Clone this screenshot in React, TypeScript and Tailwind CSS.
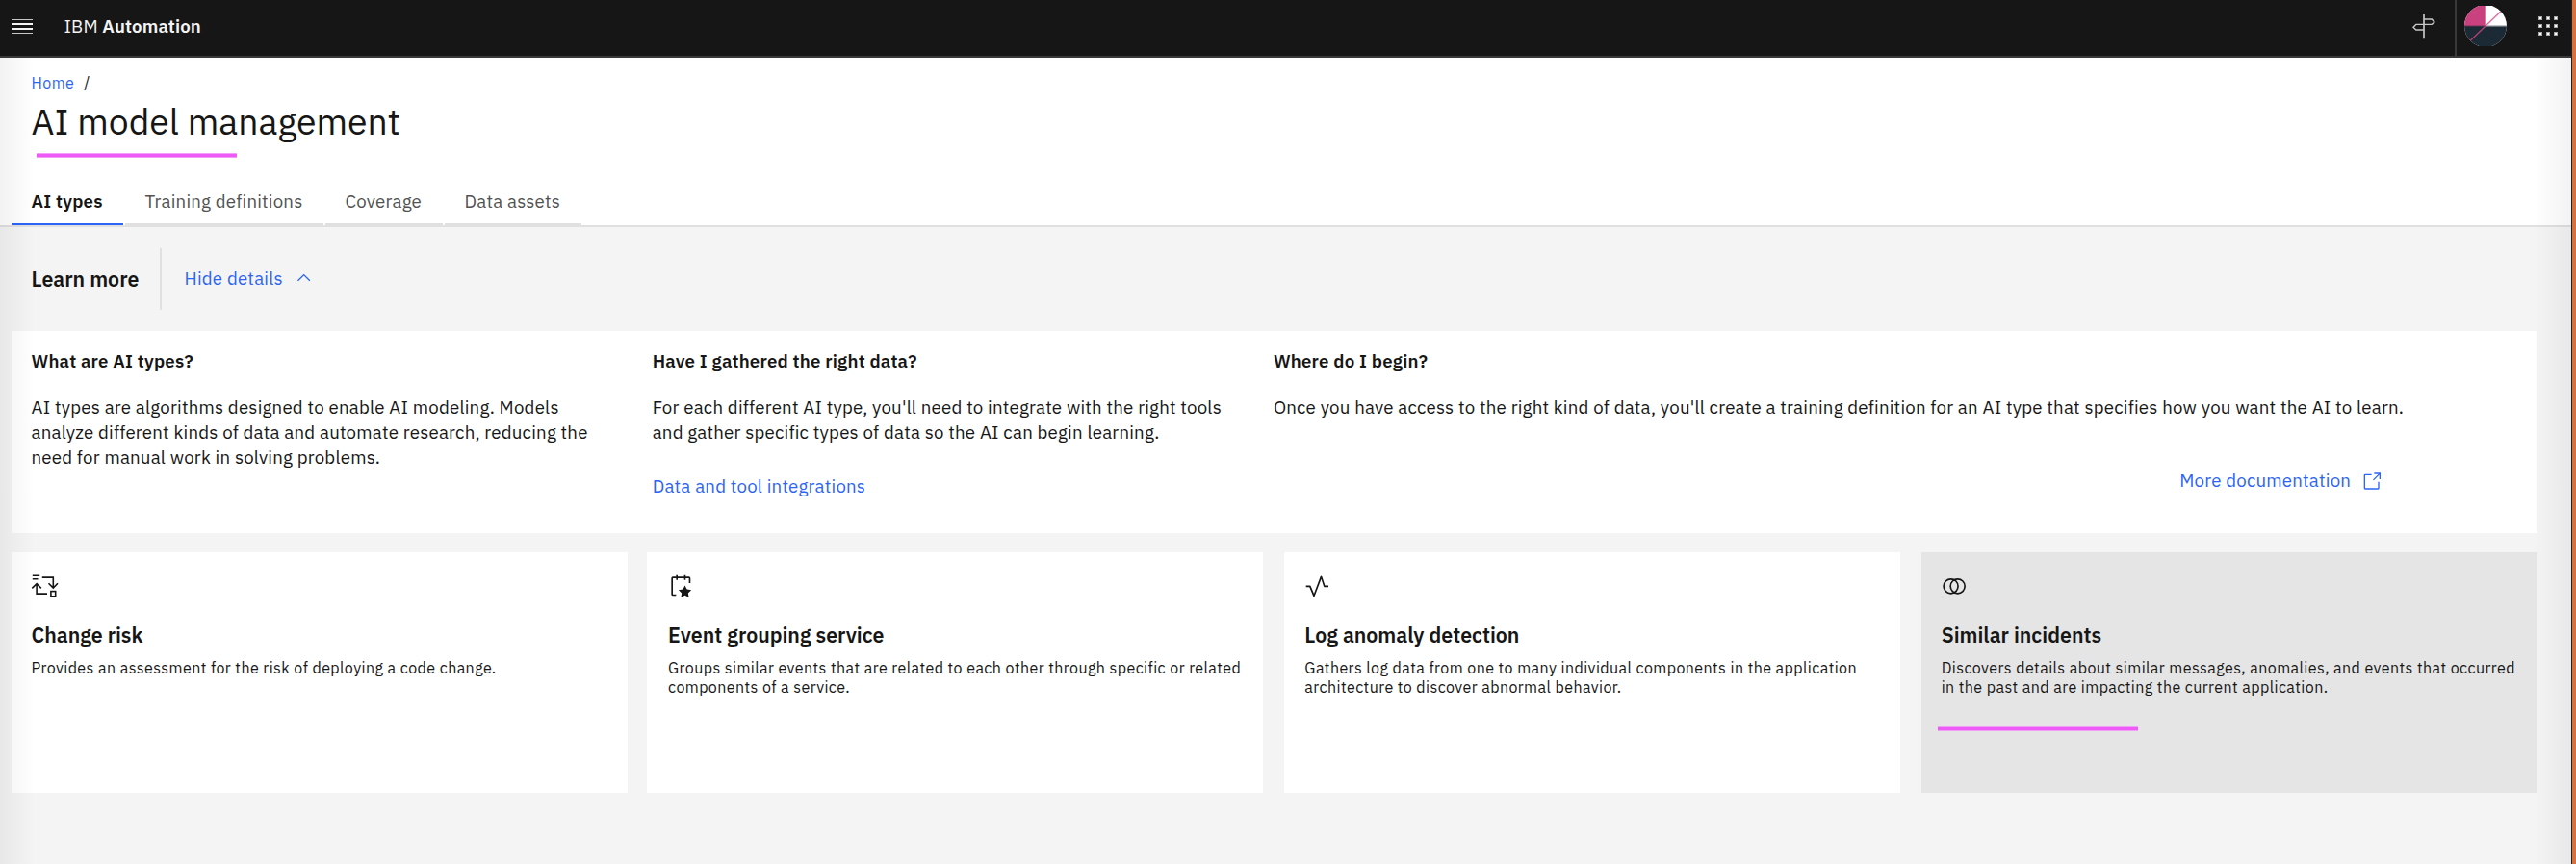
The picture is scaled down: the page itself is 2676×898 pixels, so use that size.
import type { ReactNode } from "react";

const body = "text-[18.667px] tracking-[0.213px]";

function MenuIcon() {
  return (
    <svg className="h-[18px] w-[22px]" viewBox="0 0 22 18" shapeRendering="crispEdges">
      <rect y="0.5" width="22" height="1.5" fill="#c6c6c6" />
      <rect y="5" width="22" height="1.5" fill="#f4f4f4" />
      <rect y="10" width="22" height="1.5" fill="#f4f4f4" />
      <rect y="14.5" width="22" height="1.5" fill="#c6c6c6" />
    </svg>
  );
}

function SignpostIcon() {
  return (
    <svg className="h-[26px] w-[24px]" viewBox="0 0 24 26" fill="none" stroke="#c6c6c6" strokeWidth="1.4">
      <path d="M12 0V25.3" strokeWidth="1.7" />
      <path d="M12 5H20.2L23 8L20.2 10.4H12" />
      <path d="M12 10.4H3.8L1 13.2L3.8 16H12" />
    </svg>
  );
}

function Avatar() {
  return (
    <svg className="h-[42px] w-[44px]" viewBox="0 0 44 42">
      <defs>
        <clipPath id="avatar">
          <circle cx="22" cy="21" r="22" />
        </clipPath>
      </defs>
      <g clipPath="url(#avatar)">
        <rect width="44" height="42" fill="#ffffff" />
        <rect width="22" height="21" fill="#c9417e" />
        <rect y="21" width="44" height="21" fill="#1c2a35" />
        <path d="M22 0V20" stroke="#e3b9cd" strokeWidth="1" />
        <path d="M22 20.8H44" stroke="#a7adb2" strokeWidth="1.2" />
        <path d="M0 20.8H22" stroke="#8a3a63" strokeWidth="1" />
        <path d="M37.7 6L22 21" stroke="#dd6ea1" strokeWidth="1.4" />
        <path d="M22 21L6.2 36.2" stroke="#b03e74" strokeWidth="1.4" />
      </g>
    </svg>
  );
}

function SwitcherIcon() {
  const cells = [0, 8, 16];
  return (
    <svg className="h-[20px] w-[20px]" viewBox="0 0 20 20">
      {cells.map((y) =>
        cells.map((x) => (
          <g key={`${x}-${y}`}>
            <rect x={x} y={y} width="4" height="4" fill="#a8a8a8" />
            <rect x={x + 1} y={y + 1} width="2" height="2" fill="#ffffff" />
          </g>
        )),
      )}
    </svg>
  );
}

function ChangeIcon() {
  return (
    <svg className="h-[26.667px] w-[26.667px] overflow-visible" viewBox="0 0 26.667 26.667" fill="none" stroke="#161616" strokeWidth="1.6">
      <path d="M0.8 2.2H8.2M0.8 5.8H6.5" />
      <path d="M10.8 4.1H22.3V15.4M17.5 10.2L22.3 15L27 10.2" />
      <path d="M16 21.1H5.1V10.6M0.3 15.4L5.1 10.6L9.8 15.4" />
      <rect x="19.9" y="18.6" width="4.8" height="5.2" />
    </svg>
  );
}

function EventIcon() {
  return (
    <svg className="h-[26.667px] w-[26.667px]" viewBox="0 0 32 32" fill="#161616">
      <path d="M26,4H22V2H20V4H12V2H10V4H6A2,2,0,0,0,4,6V26a2,2,0,0,0,2,2h4V26H6V6h4V8h2V6h8V8h2V6h4v6h2V6A2,2,0,0,0,26,4Z" />
      <path d="M21 15L23.549 19.938L29 20.729L25 24.573L26 30L21 27.438L16 30L17 24.573L13 20.729L18.6 19.938Z" />
    </svg>
  );
}

function ActivityIcon() {
  return (
    <svg className="h-[26.667px] w-[26.667px]" viewBox="0 0 32 32" fill="#161616">
      <path d="M12,29a1,1,0,0,1-.92-.62L6.33,17H2V15H7a1,1,0,0,1,.92.62L12,25.28,20.06,3.65A1,1,0,0,1,21,3a1,1,0,0,1,.93.68L25.72,15H30v2H25a1,1,0,0,1-.95-.68L21,7,12.94,28.35A1,1,0,0,1,12,29Z" />
    </svg>
  );
}

function CirclesIcon() {
  return (
    <svg className="h-[26.667px] w-[26.667px]" viewBox="0 0 32 32" fill="none" stroke="#161616" strokeWidth="2">
      <circle cx="11.5" cy="16" r="9" />
      <circle cx="20" cy="16" r="9" />
    </svg>
  );
}

function LaunchIcon() {
  return (
    <svg className="h-[21.333px] w-[21.333px]" viewBox="0 0 32 32" fill="#2c64f6">
      <path d="M26,28H6a2,2,0,0,1-2-2V6A2,2,0,0,1,6,4H16V6H6V26H26V16h2V26A2,2,0,0,1,26,28Z" />
      <path d="M20 2V4H26.586L18 12.586L19.414 14L28 5.414V12H30V2Z" />
    </svg>
  );
}

function ChevronUpIcon() {
  return (
    <svg className="h-[21.333px] w-[21.333px]" viewBox="0 0 32 32" fill="#2c64f6">
      <path d="M16 10L26 20L24.6 21.4L16 12.8L7.4 21.4L6 20Z" />
    </svg>
  );
}

function Header() {
  return (
    <header className="flex h-[60px] justify-between border-b-2 border-[#393939] bg-[#161616]">
      <div className="flex">
        <div className="pt-[18.5px] pl-3">
          <MenuIcon />
        </div>
        <div className="ml-[32.5px] pt-[15px] text-[18.667px] leading-6 tracking-[0.133px] text-[#f4f4f4]">
          IBM <span className="font-semibold">Automation</span>
        </div>
      </div>
      <div className="flex">
        <div className="w-[44px] pt-[15px]">
          <SignpostIcon />
        </div>
        <div className="h-[58px] w-[2px] bg-[#393939]" />
        <div className="ml-2 pt-1.5">
          <Avatar />
        </div>
        <div className="mr-[14px] ml-[33px] pt-[17px]">
          <SwitcherIcon />
        </div>
      </div>
    </header>
  );
}

function Tab({ label, className, active }: { label: string; className: string; active?: boolean }) {
  return (
    <div
      className={`h-[37px] border-b-2 pl-[20.5px] leading-6 whitespace-nowrap ${body} ${className} ${
        active ? "border-[#2c64f6] font-semibold text-[#161616]" : "border-[#e0e0e0] text-[#525252]"
      }`}
    >
      {label}
    </div>
  );
}

function Marker({ className }: { className: string }) {
  return <div className={`h-[5px] border-y border-[#f29df7] bg-[#ee5af5] ${className}`} />;
}

function InfoColumn({ title, children, className }: { title: string; children: ReactNode; className: string }) {
  return (
    <section className={`pt-[18px] pl-[20.5px] leading-[26px] ${body} ${className}`}>
      <h2 className="mb-[22px] font-semibold">{title}</h2>
      {children}
    </section>
  );
}

function Card({ icon, title, text, className, children }: { icon: ReactNode; title: string; text: string; className: string; children?: ReactNode }) {
  return (
    <article className={`h-[250px] w-[640px] shrink-0 pt-[22px] ${className}`}>
      <div className="pr-[21.33px]">
        {icon}
        <h3 className="mt-[23.333px] text-[21.333px] leading-7 font-semibold">{title}</h3>
        <p className="mt-[10px] -mr-2 text-[16px] leading-5 tracking-[0.427px]">{text}</p>
      </div>
      {children}
    </article>
  );
}

export default function App() {
  return (
    <div className="flex h-[898px] w-full overflow-hidden font-['IBM_Plex_Sans','Noto_Sans',sans-serif] text-[#161616]">
      <div className="relative w-[2671px] shrink-0 bg-[#f4f4f4]">
        <Header />
        <div className="border-b-2 border-[#e0e0e0] bg-white pt-4">
          <div className="pl-[32.5px]">
            <nav className="flex gap-[10px] text-[16px] leading-5 tracking-[0.427px]">
              <a className="text-[#2c64f6]">Home</a>
              <span>/</span>
            </nav>
            <h1 className="mt-1.5 text-[37.333px] leading-[48px]">AI model management</h1>
          </div>
          <Marker className="mt-[9px] ml-[38px] w-[208px]" />
          <div className="mt-[33px] ml-3 flex gap-[2px]">
            <Tab label="AI types" className="w-[116px]" active />
            <Tab label="Training definitions" className="w-[206px]" />
            <Tab label="Coverage" className="w-[122px]" />
            <Tab label="Data assets" className="w-[142px]" />
          </div>
        </div>

        <div className="mt-[22px] flex h-16 items-center pl-[32.5px]">
          <h2 className="w-[133.5px] text-[21.333px] leading-7 font-semibold">Learn more</h2>
          <div className="h-16 w-[2px] bg-[#e0e0e0]" />
          <div className={`mb-[2px] ml-[23.5px] flex items-center text-[#2c64f6] ${body}`}>
            <span className="w-[113px] leading-6">Hide details</span>
            <ChevronUpIcon />
          </div>
        </div>

        <div className="mt-[22px] ml-3 flex h-[210px] w-[2624px] bg-white">
          <InfoColumn title="What are AI types?" className="w-[645.2px]">
            <p className="w-[602px]">
              AI types are algorithms designed to enable AI modeling. Models analyze different kinds of data and automate
              research, reducing the need for manual work in solving problems.
            </p>
          </InfoColumn>
          <InfoColumn title="Have I gathered the right data?" className="w-[645.2px]">
            <p className="w-[602px]">
              For each different AI type, you'll need to integrate with the right tools and gather specific types of data so
              the AI can begin learning.
            </p>
            <a className="mt-[30px] block text-[#2c64f6]">Data and tool integrations</a>
          </InfoColumn>
          <InfoColumn title="Where do I begin?" className="flex-1">
            <p>
              Once you have access to the right kind of data, you'll create a training definition for an AI type that
              specifies how you want the AI to learn.
            </p>
            <a className="mt-[50px] mr-[161.5px] flex justify-end text-[#2c64f6]">
              <span className="mr-[11px]">More documentation</span>
              <span className="pt-[4.3px]">
                <LaunchIcon />
              </span>
            </a>
          </InfoColumn>
        </div>

        <div className="mt-5 ml-3 flex">
          <Card
            icon={<ChangeIcon />}
            title="Change risk"
            text="Provides an assessment for the risk of deploying a code change."
            className="bg-white pl-[20.5px]"
          />
          <Card
            icon={<EventIcon />}
            title="Event grouping service"
            text="Groups similar events that are related to each other through specific or related components of a service."
            className="ml-5 bg-white pl-[22px]"
          />
          <Card
            icon={<ActivityIcon />}
            title="Log anomaly detection"
            text="Gathers log data from one to many individual components in the application architecture to discover abnormal behavior."
            className="ml-[22px] bg-white pl-[21.33px]"
          />
          <Card
            icon={<CirclesIcon />}
            title="Similar incidents"
            text="Discovers details about similar messages, anomalies, and events that occurred in the past and are impacting the current application."
            className="ml-[22px] bg-[#e5e5e5] pl-[20.67px]"
          >
            <Marker className="mt-[31px] -ml-[4.17px] w-[208px]" />
          </Card>
        </div>

        <div className="pointer-events-none absolute top-[60px] bottom-0 left-0 w-[36px] bg-linear-to-r from-black/5 to-transparent" />
        <div className="pointer-events-none absolute top-[60px] right-0 bottom-0 w-[39px] bg-linear-to-l from-black/5 to-transparent" />
      </div>
      <div className="w-px bg-[#1c2226]" />
      <div className="flex-1 bg-[#d9703a]" />
    </div>
  );
}
